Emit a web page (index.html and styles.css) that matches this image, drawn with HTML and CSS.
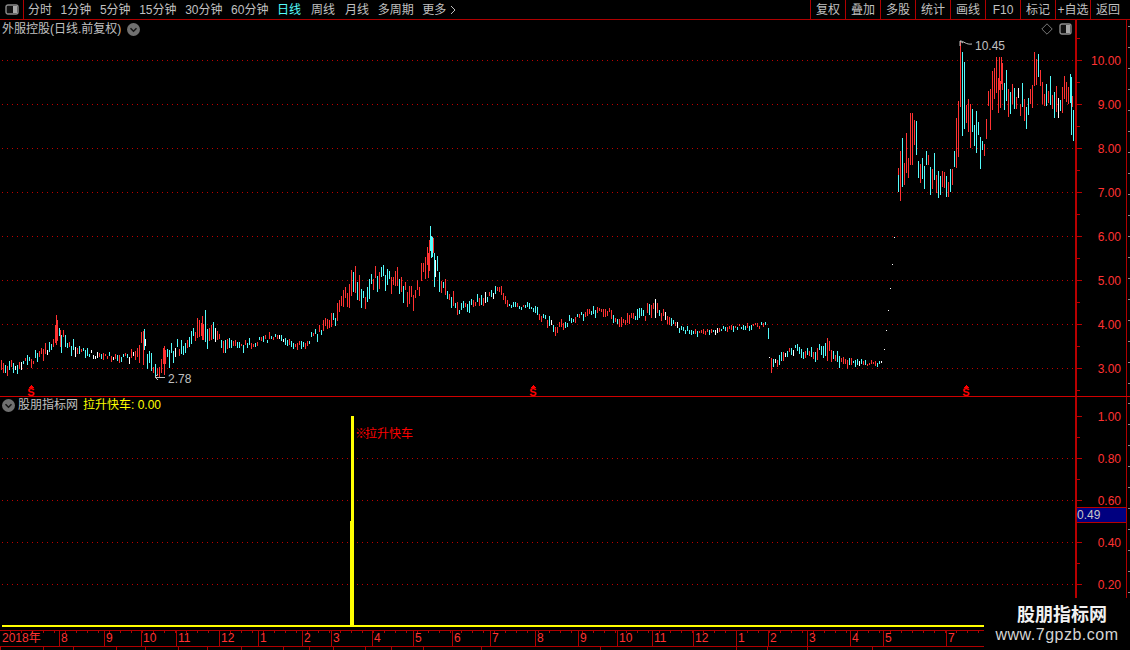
FILE: index.html
```html
<!DOCTYPE html>
<html lang="zh-CN">
<head>
<meta charset="utf-8">
<title>外服控股 日线</title>
<link rel="stylesheet" href="styles.css">
</head>
<body>
<div class="app">
  <header class="toolbar">
    <button class="panel-btn" aria-label="面板">
      <svg class="panel-icon" width="14" height="11" viewBox="0 0 14 11"><rect x="1" y="1" width="12" height="9" rx="2" fill="#111" stroke="#8c8c8c" stroke-width="1.4"/><rect x="8" y="2" width="4" height="7" fill="#a8a8a8"/></svg>
    </button>
    <nav class="tabs">
      <a>分时</a><a>1分钟</a><a>5分钟</a><a>15分钟</a><a>30分钟</a><a>60分钟</a><a class="active">日线</a><a class="wide">周线</a><a class="wide">月线</a><a>多周期</a><a>更多 <svg class="more-arrow" width="6" height="10" viewBox="0 0 6 10"><path d="M1 1l4 4-4 4" fill="none" stroke="#c0c0c0"/></svg></a>
    </nav>
    <nav class="actions">
      <a>复权</a><a>叠加</a><a>多股</a><a>统计</a><a>画线</a><a>F10</a><a>标记</a><a>+自选</a><a class="back">返回</a>
    </nav>
  </header>

  <section class="pane pane-price">
    <div class="plot">
      <svg id="price-chart" class="chart" width="1075" height="376"></svg>
      <div class="pane-title">
        <span>外服控股(日线.前复权)</span>
        <svg class="chevron" width="13" height="13" viewBox="0 0 13 13"><circle cx="6.5" cy="6.5" r="6.5" fill="#707070"/><path d="M3.5 5.2l3 3 3-3" fill="none" stroke="#151515" stroke-width="1.5"/></svg>
      </div>
      <div class="plot-tools">
        <svg width="12" height="12" viewBox="0 0 12 12"><path d="M6 .8L11.2 6 6 11.2.8 6z" fill="none" stroke="#777"/></svg>
        <svg width="13" height="12" viewBox="0 0 13 12"><rect x="1" y="1" width="11" height="10" rx="2" fill="#111" stroke="#8c8c8c" stroke-width="1.4"/><rect x="7" y="2" width="4" height="8" fill="#a8a8a8"/></svg>
      </div>
      <span class="extreme extreme-high">10.45</span>
      <span class="extreme extreme-low">2.78</span>
    </div>
    <div class="axis axis-price">
      <div class="axis-row">10.00</div>
      <div class="axis-row">9.00</div>
      <div class="axis-row">8.00</div>
      <div class="axis-row">7.00</div>
      <div class="axis-row">6.00</div>
      <div class="axis-row">5.00</div>
      <div class="axis-row">4.00</div>
      <div class="axis-row">3.00</div>
    </div>
    <div class="edge"></div>
  </section>

  <section class="pane pane-indicator">
    <div class="plot">
      <svg id="indicator-chart" class="chart" width="1075" height="233"></svg>
      <div class="pane-title indicator-title">
        <svg class="chevron" width="13" height="13" viewBox="0 0 13 13"><circle cx="6.5" cy="6.5" r="6.5" fill="#707070"/><path d="M3.5 5.2l3 3 3-3" fill="none" stroke="#151515" stroke-width="1.5"/></svg>
        <span>股朋指标网</span>
        <span class="indicator-value">拉升快车: 0.00</span>
      </div>
      <span class="signal-label"><b class="signal-mark">※</b>拉升快车</span>
    </div>
    <div class="axis axis-indicator">
      <div class="axis-row">1.00</div>
      <div class="axis-row">0.80</div>
      <div class="axis-row">0.60</div>
      <div class="axis-row">0.40</div>
      <div class="axis-row">0.20</div>
      <span class="cursor-value">0.49</span>
    </div>
    <div class="edge"></div>
  </section>

  <div id="time-axis" class="time-axis"></div>
  <div id="status-row" class="status-row"></div>

  <aside class="watermark">
    <strong>股朋指标网</strong>
    <span>www.7gpzb.com</span>
  </aside>
</div>
<script src="chart.js"></script>
</body>
</html>
```
FILE: styles.css
```css
* { box-sizing: border-box; }
html, body { margin: 0; height: 100%; background: #000; overflow: hidden; }
body { font: 12px/14px "Liberation Sans", "Noto Sans CJK SC", sans-serif; color: #c0c0c0; }

.app { position: relative; width: 1130px; height: 650px; overflow: hidden; background: #000; }

/* toolbar */
.toolbar { display: flex; height: 20px; border-bottom: 1px solid #b00000; }
.panel-btn { display: flex; align-items: center; justify-content: center; width: 24px; padding: 0; background: none; border: 0; border-right: 1px solid #b00000; }
.tabs { display: flex; align-items: center; gap: 8.6px; padding-left: 4px; }
.tabs a { white-space: nowrap; }
.tabs .active { color: #54fcfc; }
.tabs .wide { margin-left: 1.4px; }
.more-arrow { vertical-align: -1px; }
.actions { display: flex; margin-left: auto; }
.actions a { display: flex; align-items: center; justify-content: center; width: 35px; border-left: 1px solid #b00000; white-space: nowrap; }
.actions .back { width: 40px; padding-right: 5px; }

/* panes */
.pane { display: flex; }
.pane-price { height: 377px; border-bottom: 1px solid #d00000; }
.pane-indicator { height: 233px; }
.plot { position: relative; width: 1075px; flex: none; }
.chart { display: block; shape-rendering: crispEdges; }

.pane-title { position: absolute; left: 2px; top: 2px; display: flex; align-items: center; gap: 6px; }
.chevron { flex: none; }
.indicator-title { left: 2px; top: 1px; gap: 3px; }
.indicator-value { margin-left: 2px; color: #ffff00; }

.plot-tools { position: absolute; top: 3px; right: 3px; display: flex; align-items: center; gap: 6px; }

.extreme { position: absolute; }
.extreme-high { left: 975px; top: 19px; }
.extreme-low { left: 168px; top: 352px; }
.signal-label { position: absolute; left: 355px; top: 30px; color: #ff0000; }
.signal-mark { margin-right: -2px; font-weight: 700; }

/* value axes */
.axis { position: relative; width: 51px; flex: none; border-left: 2px solid #b80000; color: #ff3232;
  background-image: linear-gradient(#b80000 0 1px, transparent 1px), linear-gradient(#b80000 0 1px, transparent 1px);
  background-repeat: repeat-y; background-clip: padding-box; }
.axis-price { padding-top: 18px; background-size: 5px 44px, 3px 22px; background-position: 0 40px, 0 18px; }
.axis-indicator { background-size: 5px 42px, 3px 21px; background-position: 0 19px, 0 19px; }
.axis-indicator .axis-row:first-child { margin-top: -2px; }
.axis-row { display: flex; align-items: center; justify-content: flex-end; padding: 2px 5px 0 0; }
.axis-price .axis-row { height: 44px; }
.axis-indicator .axis-row { height: 42px; }
.cursor-value { position: absolute; left: 0; top: 110px; width: 49px; height: 16px; padding-left: 0; background: #000080; border: solid #b80000; border-width: 1px 0; color: #c8c8c8; line-height: 14px; }
.edge { flex: 1; border-left: 1px solid #b00000; background: linear-gradient(#8a8a8a 0 1px, transparent 1px) right 0 top 6px / 2px 21px repeat-y; }

/* time axis */
.time-axis { display: flex; height: 17px; border-top: 1px solid #b00000; border-bottom: 1px solid #b00000; color: #ff3232;
  background: repeating-linear-gradient(90deg, transparent 0 10px, #b00000 10px 11px) 0 0 / 100% 2px no-repeat; }
.time-cell { flex: none; padding-left: 1px; border-left: 1px solid #b00000; line-height: 15px; white-space: nowrap; }
.time-cell:first-child { padding-left: 2px; border-left: 0; }

/* status row under the axis */
.status-row { display: flex; height: 3px; }
.status-cell { flex: none; border-left: 1px solid #b00000; }

/* watermark */
.watermark { position: absolute; left: 984px; top: 598px; width: 146px; height: 52px; display: flex; flex-direction: column; align-items: center; background: #000; }
.watermark strong { margin: 5px 0 0 10px; color: #f0f0f0; font-size: 18px; line-height: 24px; font-weight: 700; }
.watermark span { margin-top: -1px; color: #d4d4d4; font-size: 16px; line-height: 17px; font-weight: 400; letter-spacing: .5px; }
```
FILE: chart.js
```js
(function () {
  var NS = 'http://www.w3.org/2000/svg';
  var RED = '#ff3232', CYAN = '#54fcfc', WHITE = '#ffffff', GRID = '#c00000';
  var PRICE_TOP = 20, IND_TOP = 397;

  var seed = 20180731;
  function rnd() {
    seed |= 0; seed = seed + 0x6D2B79F5 | 0;
    var t = Math.imul(seed ^ seed >>> 15, 1 | seed);
    t = t + Math.imul(t ^ t >>> 7, 61 | t) ^ t;
    return ((t ^ t >>> 14) >>> 0) / 4294967296;
  }

  function el(svg, name, attrs) {
    var n = document.createElementNS(NS, name);
    for (var k in attrs) n.setAttribute(k, attrs[k]);
    svg.appendChild(n);
    return n;
  }
  function bar(svg, x, y1, y2, c, top) {
    el(svg, 'rect', { x: x, y: Math.round(y1 - top), width: 1, height: Math.max(1, Math.round(y2 - y1)), fill: c });
  }
  function dotted(svg, y) {
    el(svg, 'line', { x1: 2, x2: 1075, y1: y + 0.5, y2: y + 0.5, stroke: GRID, 'stroke-dasharray': '1 4' });
  }

  /* [x, centre y on screen, typical bar length] */
  var segments = [
    [[1,368,8],[20,365,7],[40,356,8],[50,345,12],[56,335,18],[65,342,12],[80,352,6],[100,356,5],[130,358,6],[142,345,16],[150,358,14],[157,373,8],[165,355,14],[185,345,10],[205,328,18],[215,340,12],[240,347,6],[265,340,6],[275,336,5],[300,346,6],[320,332,8],[340,310,14],[355,280,20],[365,295,16],[380,272,14],[400,285,14],[410,300,14],[425,275,20],[432,245,24],[440,285,14],[460,308,10],[480,300,8],[500,292,8],[510,307,5],[530,305,5],[545,320,8],[555,330,8],[570,320,5],[605,310,7],[620,322,7],[655,310,10],[680,330,4],[700,332,4],[730,328,4],[766,325,4]],
    [[773,362,8],[795,349,6],[810,355,8],[828,347,14],[840,360,8],[860,363,4],[882,364,4]],
    [[898,182,20],[905,155,34],[912,142,34],[920,165,22],[935,172,22],[948,185,14],[955,150,36],[960,80,55],[968,105,36],[975,130,32],[982,155,20],[990,98,30],[1000,80,28],[1010,95,22],[1020,100,18],[1028,115,16],[1035,74,26],[1045,90,22],[1060,100,18],[1072,95,22]]
  ];
  /* stretches where the bars stay one colour */
  var runs = [[40,44,RED],[52,58,RED],[138,143,RED],[160,166,RED],[198,204,RED],[322,332,RED],[336,352,RED],[404,429,RED],[500,508,RED],[600,612,RED],[620,632,RED],[680,692,CYAN],[904,914,RED],[956,961,RED],[972,982,CYAN],[984,1002,RED],[1030,1036,RED]];
  /* [x, top, bottom, colour]: the bars that stand out */
  var spikes = [
    [56,315,345,RED],[60,330,347,RED],[143,334,365,RED],[144,329,350,CYAN],[155,368,378,CYAN],[164,346,375,RED],
    [202,316,340,RED],[205,310,342,CYAN],[430,226,251,CYAN],[432,237,257,CYAN],[434,253,287,CYAN],[428,253,278,RED],
    [655,299,318,WHITE],[768,328,339,CYAN],[771,358,373,RED],[827,338,361,RED],
    [898,175,192,CYAN],[900,151,201,RED],[902,138,175,CYAN],[910,120,165,RED],[912,113,165,RED],
    [960,41,105,RED],[962,52,95,CYAN],[964,62,100,CYAN],[999,57,90,RED],[1001,57,84,RED],
    [1034,52,85,RED],[1071,77,135,CYAN],[1073,110,141,CYAN],[1075,140,163,RED]
  ];
  var limitDots = [[769,357],[884,349],[886,330],[888,310],[890,288],[892,264],[894,237]];

  function centre(pts, x) {
    for (var i = 0; i < pts.length - 1; i++) {
      if (x <= pts[i + 1][0]) {
        var t = (x - pts[i][0]) / (pts[i + 1][0] - pts[i][0]);
        return [pts[i][1] + (pts[i + 1][1] - pts[i][1]) * t, pts[i][2] + (pts[i + 1][2] - pts[i][2]) * t];
      }
    }
    var l = pts[pts.length - 1];
    return [l[1], l[2]];
  }
  function runColour(x) {
    for (var i = 0; i < runs.length; i++) if (x >= runs[i][0] && x <= runs[i][1]) return runs[i][2];
    return null;
  }

  var price = document.getElementById('price-chart');
  for (var y = 60; y <= 368; y += 44) dotted(price, y - PRICE_TOP);

  var last = RED;
  segments.forEach(function (pts) {
    for (var x = pts[0][0]; x <= pts[pts.length - 1][0]; x += 2) {
      var c = centre(pts, x);
      var len = c[1] * (0.4 + rnd() * 1.0);
      var mid = c[0] + (rnd() - 0.5) * c[1] * 1.1;
      var col = runColour(x);
      if (!col) {
        col = rnd() < 0.6 ? (last === RED ? CYAN : RED) : last;
        if (rnd() < 0.06) col = WHITE;
      }
      if (col !== WHITE) last = col;
      bar(price, x, mid - len / 2, mid + len / 2, col, PRICE_TOP);
    }
  });
  spikes.forEach(function (s) { bar(price, s[0], s[1], s[2], s[3], PRICE_TOP); });
  limitDots.forEach(function (d) { bar(price, d[0], d[1], d[1] + 1, WHITE, PRICE_TOP); });

  /* arrows to the high and low labels */
  el(price, 'path', { d: 'M963 23l-3-2 0 5M960 21c4 0 6 4 12 3', fill: 'none', stroke: '#c0c0c0', style: 'shape-rendering:auto' });
  el(price, 'path', { d: 'M165 357h-10M158 354l-3 3 3 3', fill: 'none', stroke: '#c0c0c0' });

  /* S markers along the bottom of the price pane */
  [31, 533, 966].forEach(function (x) {
    el(price, 'path', { d: 'M' + (x - 3) + ' 368h6l-3-3z', fill: '#ff0000' });
    var t = el(price, 'text', { x: x, y: 375.5, fill: '#ff0000', 'text-anchor': 'middle', 'font-size': 11, 'font-weight': 700, 'font-family': 'Liberation Sans' });
    t.textContent = 'S';
  });

  var ind = document.getElementById('indicator-chart');
  [458, 500, 542, 584].forEach(function (y) { dotted(ind, y - IND_TOP); });
  el(ind, 'rect', { x: 351, y: 416 - IND_TOP, width: 3, height: 211, fill: '#ffff00' });
  el(ind, 'rect', { x: 350, y: 521 - IND_TOP, width: 4, height: 106, fill: '#ffff00' });
  el(ind, 'rect', { x: 2, y: 625 - IND_TOP, width: 1073, height: 2, fill: '#ffff00' });

  /* month cells */
  var months = [[0,'2018年'],[59,'8'],[104,'9'],[141,'10'],[176,'11'],[219,'12'],[258,'1'],[302,'2'],[331,'3'],[372,'4'],[413,'5'],[452,'6'],[490,'7'],[535,'8'],[578,'9'],[617,'10'],[652,'11'],[693,'12'],[736,'1'],[768,'2'],[807,'3'],[850,'4'],[883,'5'],[946,'7'],[1130,'']];
  var axis = document.getElementById('time-axis');
  for (var i = 0; i < months.length - 1; i++) {
    var cell = document.createElement('div');
    cell.className = 'time-cell';
    cell.style.width = (months[i + 1][0] - months[i][0]) + 'px';
    cell.textContent = months[i][1];
    axis.appendChild(cell);
  }

  /* cells of the row cut off by the window */
  var stops = [0,43,73,116,145,178,207,241,283,309,333,365,391,423,481,600,736,767,807,872,1130];
  var row = document.getElementById('status-row');
  for (var j = 0; j < stops.length - 1; j++) {
    var s = document.createElement('div');
    s.className = 'status-cell';
    s.style.width = (stops[j + 1] - stops[j]) + 'px';
    row.appendChild(s);
  }
})();
```
